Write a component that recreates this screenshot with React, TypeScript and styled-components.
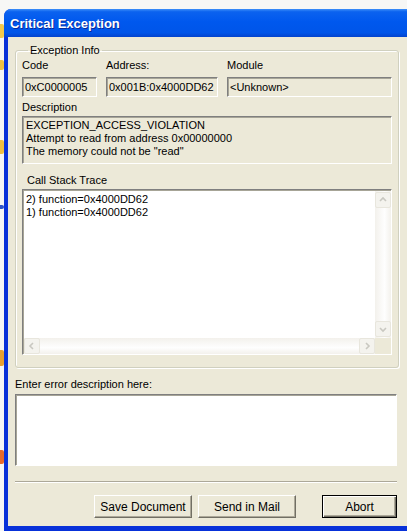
import React from 'react';
import styled, { createGlobalStyle } from 'styled-components';

const GlobalStyle = createGlobalStyle`
  html, body {
    margin: 0;
    padding: 0;
    background: #ffffff;
  }
  body {
    font-family: "Liberation Sans", Arial, sans-serif;
    font-size: 11px;
    color: #000;
  }
`;

const Desktop = styled.div`
  position: relative;
  width: 407px;
  height: 531px;
  overflow: hidden;
  background: #f7f7f5;
`;

const DesktopIcon = styled.div<{ $top: number; $color: string; $h?: number }>`
  position: absolute;
  left: -6px;
  top: ${p => p.$top}px;
  width: 10px;
  height: ${p => p.$h ?? 14}px;
  border-radius: 2px;
  background: ${p => p.$color};
`;

const Window = styled.div`
  position: relative;
  margin: 9px 0 0 4px;
  width: 440px;
  height: 530px;
  background: #0831d9;
  border-radius: 7px 7px 0 0;
  overflow: hidden;
`;

const TitleBar = styled.div`
  height: 28px;
  display: flex;
  align-items: center;
  padding-left: 6px;
  background: linear-gradient(
    to bottom,
    #3d8ff9 0%,
    #0b62ef 10%,
    #0058ee 45%,
    #0055e9 85%,
    #0343cd 100%
  );
`;

const Title = styled.span`
  font-family: "Liberation Sans", Arial, sans-serif;
  font-weight: bold;
  font-size: 13px;
  color: #ffffff;
  text-shadow: 1px 1px 0 #0a2a9b;
`;

const Client = styled.div`
  margin-left: 4px;
  height: 489px;
  background: #ece9d8;
  padding: 7px 0 0 7px;
  box-sizing: border-box;
`;

const Content = styled.div`
  width: 382px;
  display: flex;
  flex-direction: column;
`;

const GroupBox = styled.fieldset`
  margin: 0;
  padding: 2px 6px 12px 6px;
  border: 1px solid #d0d0bf;
  border-radius: 3px;
  box-shadow: inset 1px 1px 0 #ffffff, 1px 1px 0 #ffffff;
  box-sizing: border-box;
`;

const Legend = styled.legend`
  padding: 0 2px;
  margin-left: 6px;
  line-height: 13px;
`;

const Label = styled.div<{ $indent?: number }>`
  line-height: 13px;
  height: 13px;
  padding-left: ${p => p.$indent ?? 0}px;
  white-space: nowrap;
`;

const FieldRow = styled.div`
  display: flex;
  gap: 9px;
  margin-bottom: 4px;
`;

const FieldColumn = styled.div<{ $w: number }>`
  width: ${p => p.$w}px;
  display: flex;
  flex-direction: column;
  gap: 5px;
`;

const Sunken = styled.div`
  border: 1px solid;
  border-color: #7f7f7f #ffffff #ffffff #7f7f7f;
  box-shadow: inset 1px 1px 0 #a7a597;
  box-sizing: border-box;
`;

const ReadOnlyField = styled(Sunken)`
  height: 20px;
  line-height: 18px;
  padding-left: 2px;
  white-space: nowrap;
  overflow: hidden;
`;

const DescBox = styled(Sunken)`
  margin-top: 2px;
  height: 48px;
  padding: 2px 3px;
  line-height: 13px;
`;

const StackPanel = styled.div`
  margin-top: 10px;
  display: flex;
  flex-direction: column;
  gap: 2px;
`;

const ListBox = styled(Sunken)`
  height: 166px;
  background: #ffffff;
  display: grid;
  grid-template-columns: 1fr 16px;
  grid-template-rows: 1fr 16px;
  padding: 1px 0 0 1px;
`;

const ListText = styled.div`
  padding: 2px 2px;
  line-height: 13px;
`;

const VScroll = styled.div`
  display: flex;
  flex-direction: column;
  justify-content: space-between;
  background: linear-gradient(to right, #f3f1ec, #fefefe 60%, #f3f1ec);
  padding: 1px 0;
`;

const HScroll = styled.div`
  display: flex;
  justify-content: space-between;
  background: linear-gradient(to bottom, #f3f1ec, #fefefe 60%, #f3f1ec);
`;

const ScrollCorner = styled.div`
  background: #ece9d8;
`;

const ScrollButton = styled.div`
  width: 16px;
  height: 16px;
  box-sizing: border-box;
  border: 1px solid #e8e6dd;
  border-radius: 2px;
  background: #f4f3ee;
  display: flex;
  align-items: center;
  justify-content: center;
`;

const BigTextArea = styled(Sunken)`
  margin-top: 3px;
  height: 72px;
  background: #ffffff;
`;

const GroupGap = styled.div`
  height: 10px;
`;

const Separator = styled.div`
  margin-top: 15px;
  height: 0;
  border-top: 1px solid #aca899;
  border-bottom: 1px solid #ffffff;
`;

const ButtonRow = styled.div`
  margin-top: 12px;
  display: flex;
  justify-content: flex-end;
  gap: 6px;
`;

const Button = styled.div<{ $w: number; $default?: boolean }>`
  width: ${p => p.$w}px;
  height: 23px;
  box-sizing: border-box;
  display: flex;
  align-items: center;
  justify-content: center;
  font-size: 12px;
  background: #ece9d8;
  border: 1px solid;
  border-color: ${p => (p.$default ? '#000000' : '#ffffff #716f64 #716f64 #ffffff')};
  box-shadow: ${p =>
    p.$default
      ? 'inset 1px 1px 0 #ffffff, inset -1px -1px 0 #716f64, inset -2px -2px 0 #aca899'
      : 'inset -1px -1px 0 #aca899'};
  margin-left: ${p => (p.$default ? 20 : 0)}px;
`;

type Dir = 'up' | 'down' | 'left' | 'right';

const Chevron: React.FC<{ dir: Dir }> = ({ dir }) => {
  const paths: Record<Dir, string> = {
    up: 'M2 6 L5 3 L8 6',
    down: 'M2 4 L5 7 L8 4',
    left: 'M6 2 L3 5 L6 8',
    right: 'M4 2 L7 5 L4 8',
  };
  return (
    <svg width="10" height="10" viewBox="0 0 10 10">
      <path d={paths[dir]} fill="none" stroke="#c9c8c1" strokeWidth="1.6" />
    </svg>
  );
};

const stack = ['2) function=0x4000DD62', '1) function=0x4000DD62'];

const App: React.FC = () => {
  return (
    <>
      <GlobalStyle />
      <Desktop>
        <DesktopIcon $top={24} $color="#f2c84b" />
        <DesktopIcon $top={60} $color="#f0c040" $h={10} />
        <DesktopIcon $top={140} $color="#f0c040" />
        <DesktopIcon $top={205} $color="#2f55c8" $h={4} />
        <DesktopIcon $top={350} $color="#e8a030" $h={16} />
        <DesktopIcon $top={450} $color="#e86a2a" $h={14} />
        <Window>
          <TitleBar>
            <Title>Critical Exception</Title>
          </TitleBar>
          <Client>
            <Content>
              <GroupBox>
                <Legend>Exception Info</Legend>
                <FieldRow>
                  <FieldColumn $w={75}>
                    <Label>Code</Label>
                    <ReadOnlyField>0xC0000005</ReadOnlyField>
                  </FieldColumn>
                  <FieldColumn $w={112}>
                    <Label>Address:</Label>
                    <ReadOnlyField>0x001B:0x4000DD62</ReadOnlyField>
                  </FieldColumn>
                  <FieldColumn $w={165}>
                    <Label>Module</Label>
                    <ReadOnlyField>&lt;Unknown&gt;</ReadOnlyField>
                  </FieldColumn>
                </FieldRow>
                <Label>Description</Label>
                <DescBox>
                  EXCEPTION_ACCESS_VIOLATION
                  <br />
                  Attempt to read from address 0x00000000
                  <br />
                  The memory could not be "read"
                </DescBox>
                <StackPanel>
                  <Label $indent={5}>Call Stack Trace</Label>
                  <ListBox>
                    <ListText>
                      {stack.map(line => (
                        <div key={line}>{line}</div>
                      ))}
                    </ListText>
                    <VScroll>
                      <ScrollButton>
                        <Chevron dir="up" />
                      </ScrollButton>
                      <ScrollButton>
                        <Chevron dir="down" />
                      </ScrollButton>
                    </VScroll>
                    <HScroll>
                      <ScrollButton>
                        <Chevron dir="left" />
                      </ScrollButton>
                      <ScrollButton>
                        <Chevron dir="right" />
                      </ScrollButton>
                    </HScroll>
                    <ScrollCorner />
                  </ListBox>
                </StackPanel>
              </GroupBox>
              <GroupGap />
              <Label>Enter error description here:</Label>
              <BigTextArea />
              <Separator />
              <ButtonRow>
                <Button $w={98}>Save Document</Button>
                <Button $w={98}>Send in Mail</Button>
                <Button $w={75} $default>
                  Abort
                </Button>
              </ButtonRow>
            </Content>
          </Client>
        </Window>
      </Desktop>
    </>
  );
};

export default App;
